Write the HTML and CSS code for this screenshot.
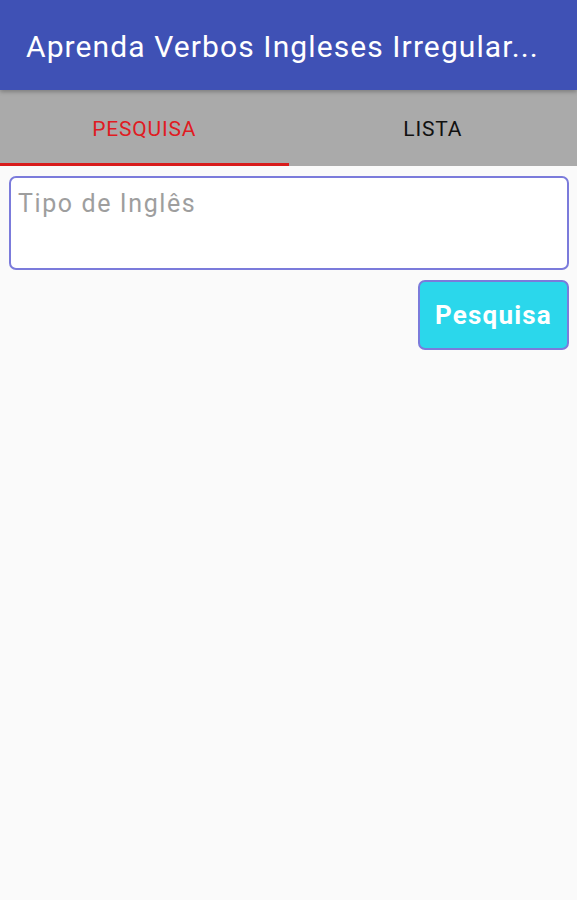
FILE: index.html
```html
<!DOCTYPE html>
<html lang="pt">
<head>
    <meta charset="UTF-8">
    <meta name="viewport" content="width=device-width, initial-scale=1.0">
    <title>Aprenda Verbos Ingleses Irregulares</title>
    <link rel="stylesheet" href="styles.css">
</head>
<body>
    <header class="app-bar">
        <h1>Aprenda Verbos Ingleses Irregular...</h1>
    </header>

    <nav class="tabs">
        <div class="tab active">PESQUISA</div>
        <div class="tab">LISTA</div>
    </nav>

    <main class="content">
        <textarea class="search-input" placeholder="Tipo de Inglês"></textarea>
        <div class="actions">
            <button type="button" class="search-btn">Pesquisa</button>
        </div>
    </main>
</body>
</html>
```

FILE: styles.css
```css
/* General Reset */
* {
    margin: 0;
    padding: 0;
    box-sizing: border-box;
}

body {
    height: 100vh;
    background-color: #fafafa;
    font-family: Roboto, "Noto Sans", sans-serif;
}

/* App bar */
.app-bar {
    height: 90px;
    background-color: #3f51b5;
    display: flex;
    align-items: center;
    padding: 2px 26px 0 26px;
    position: relative;
    z-index: 2;
    box-shadow: 0 2px 4px rgba(0, 0, 0, 0.25);
}

.app-bar h1 {
    color: #fff;
    font-size: 30px;
    font-weight: normal;
    letter-spacing: 1.1px;
    white-space: nowrap;
}

/* Tabs */
.tabs {
    display: flex;
    height: 76px;
    background-color: #aaaaaa;
}

.tab {
    flex: 1;
    display: flex;
    align-items: center;
    justify-content: center;
    font-size: 21px;
    letter-spacing: 0.8px;
    color: #111;
    border-bottom: 3px solid transparent;
    padding-top: 5px;
}

.tab.active {
    color: #e01b22;
    border-bottom-color: #d81b1b;
}

/* Content */
.content {
    padding: 10px 8px 0 9px;
}

.search-input {
    display: block;
    width: 100%;
    height: 94px;
    border: 2px solid #7b7bdb;
    border-radius: 7px;
    background-color: #fff;
    padding: 11px 7px;
    font-family: Roboto, sans-serif;
    font-size: 25px;
    letter-spacing: 1.6px;
    resize: none;
    outline: none;
}

.search-input::placeholder {
    color: #9e9e9e;
}

.actions {
    display: flex;
    justify-content: flex-end;
    margin-top: 10px;
}

.search-btn {
    width: 151px;
    height: 70px;
    background-color: #2bd7eb;
    border: 2px solid #7b7bdb;
    border-radius: 7px;
    color: #fff;
    font-family: Roboto, sans-serif;
    font-size: 26px;
    font-weight: bold;
    letter-spacing: 1.2px;
}
```
